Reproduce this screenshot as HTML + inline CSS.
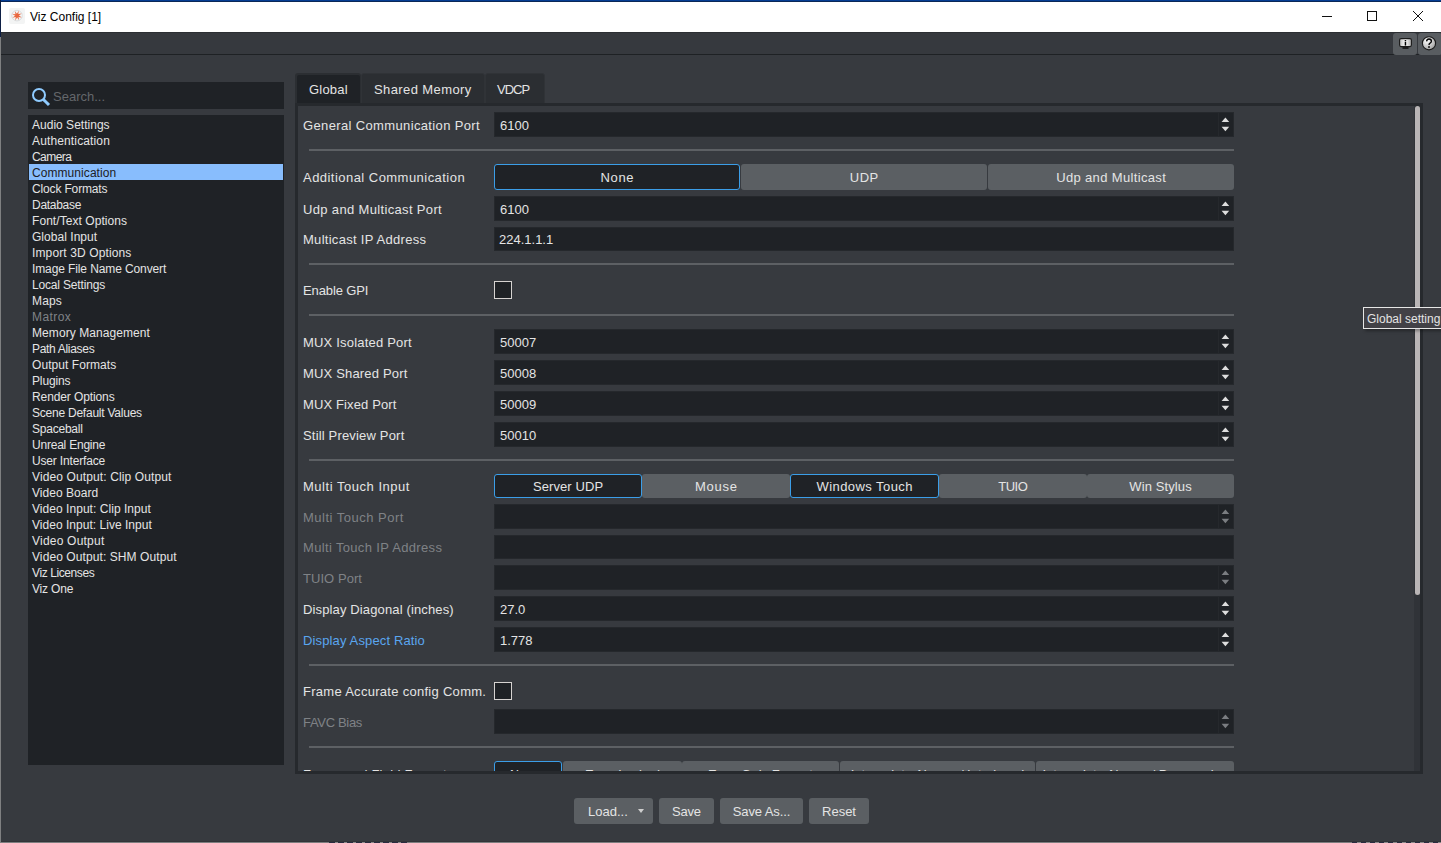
<!DOCTYPE html>
<html><head><meta charset="utf-8"><style>
*{box-sizing:border-box;margin:0;padding:0}
html,body{width:1441px;height:843px;overflow:hidden;background:#7d7e7f}
body{position:relative;font-family:"Liberation Sans",sans-serif;color:#e4e4e4}
.a{position:absolute}
.lbl{position:absolute;left:303px;font-size:13px;white-space:nowrap;letter-spacing:0.2px}
.fld{position:absolute;left:494px;width:740px;background:#1f2226;box-shadow:inset 0 0 0 1px #25282c;font-size:13px;padding-left:6px;white-space:nowrap}
.sep{position:absolute;left:309px;width:925px;height:2px;background:#5d6064}
.btn{position:absolute;background:#5b5f63;border-radius:3px;font-size:13px;text-align:center;white-space:nowrap}
.sel{background:#1f2226;border:1px solid #3b9ee8}
.li{position:absolute;left:32px;font-size:12px;height:16px;line-height:18px;white-space:nowrap}
.up{position:absolute;width:0;height:0;border-left:3.5px solid transparent;border-right:3.5px solid transparent;border-bottom:4.5px solid #dedede}
.dn{position:absolute;width:0;height:0;border-left:3.5px solid transparent;border-right:3.5px solid transparent;border-top:4.5px solid #dedede}
.cb{position:absolute;left:494px;width:18px;height:18px;border:1px solid #d6d3d1;background:#1f2226}
</style></head><body>

<div class="a" style="left:0;top:0;width:1441px;height:842px;background:#373a3f"></div>
<div class="a" style="left:0;top:0;width:1441px;height:1px;background:#053d94"></div>
<div class="a" style="left:0;top:1px;width:1441px;height:1px;background:#0b2757"></div>
<div class="a" style="left:0;top:2px;width:1441px;height:30px;background:#ffffff"></div>
<div class="a" style="left:0;top:0;width:1px;height:37px;background:#0d1f45"></div>
<div class="a" style="left:0;top:37px;width:1px;height:806px;background:#7f8081"></div>
<div class="a" style="left:1px;top:841px;width:1440px;height:1px;background:#323438"></div>
<div class="a" style="left:329px;top:842px;width:78px;height:1px;background:repeating-linear-gradient(90deg,#2a2c40 0 6px,#8a8a8a 6px 9px)"></div>
<div class="a" style="left:1352px;top:842px;width:89px;height:1px;background:repeating-linear-gradient(90deg,#2a2c40 0 5px,#8a8a8a 5px 9px)"></div>
<div class="a" style="left:9px;top:8px;width:16px;height:16px;background:#f3f4f4;border-radius:2px"></div>
<svg class="a" style="left:9px;top:8px" width="16" height="16" viewBox="0 0 16 16"><circle cx="8" cy="7.6" r="5.3" fill="none" stroke="#d6d8da" stroke-width="0.8"/><path d="M8.00 7.60L8.53 8.79L12.89 9.38L9.17 7.03ZM8.00 7.60L7.54 8.81L10.20 12.31L9.23 8.03ZM8.00 7.60L6.81 8.13L6.22 12.49L8.57 8.77ZM8.00 7.60L6.79 7.14L3.29 9.80L7.57 8.83ZM8.00 7.60L7.47 6.41L3.11 5.82L6.83 8.17ZM8.00 7.60L8.46 6.39L5.80 2.89L6.77 7.17ZM8.00 7.60L9.19 7.07L9.78 2.71L7.43 6.43ZM8.00 7.60L9.21 8.06L12.71 5.40L8.43 6.37Z" fill="#e9673f"/></svg>
<div class="a" style="left:30px;top:9px;font-size:12px;color:#000;white-space:nowrap;line-height:16px">Viz Config [1]</div>
<div class="a" style="left:1322px;top:16px;width:10px;height:1px;background:#111"></div>
<div class="a" style="left:1367px;top:11px;width:10px;height:10px;border:1px solid #111"></div>
<svg class="a" style="left:1412px;top:10px" width="12" height="12" viewBox="0 0 12 12"><g stroke="#111" stroke-width="1"><line x1="1" y1="1" x2="11" y2="11"/><line x1="11" y1="1" x2="1" y2="11"/></g></svg>
<div class="a" style="left:1px;top:32px;width:1440px;height:1px;background:#2c2f33"></div>
<div class="a" style="left:1px;top:33px;width:1440px;height:21px;background:#36393e"></div>
<div class="a" style="left:1px;top:54px;width:1440px;height:1px;background:#1e2124"></div>
<div class="a" style="left:1393px;top:33px;width:24px;height:22px;background:#595d61;border-radius:3px"></div>
<div class="a" style="left:1418px;top:33px;width:24px;height:22px;background:#595d61;border-radius:3px"></div>
<svg class="a" style="left:1398px;top:37px" width="15" height="13" viewBox="0 0 15 13">
<defs><linearGradient id="g1" x1="0" y1="0" x2="1" y2="0"><stop offset="0" stop-color="#bdbdbd"/><stop offset="0.5" stop-color="#ffffff"/><stop offset="1" stop-color="#a8a8a8"/></linearGradient>
<radialGradient id="g2" cx="0.35" cy="0.3" r="0.8"><stop offset="0" stop-color="#ffffff"/><stop offset="1" stop-color="#9a9a9a"/></radialGradient></defs>
<rect x="1.6" y="1.6" width="11.8" height="8" rx="1.5" fill="url(#g1)" stroke="#1a1a1a" stroke-width="1.1"/>
<rect x="4.5" y="10.2" width="6" height="1.6" fill="#111"/>
<rect x="6.7" y="3" width="1.5" height="1.4" fill="#000"/><rect x="6.7" y="5" width="1.5" height="3.6" fill="#000"/></svg>
<svg class="a" style="left:1421px;top:36px" width="16" height="15" viewBox="0 0 16 15">
<circle cx="8" cy="7.3" r="6.6" fill="url(#g2)" stroke="#1a1a1a" stroke-width="1.1"/>
<path d="M5.6 5.4 Q5.8 3 8 3 Q10.4 3 10.4 5.2 Q10.4 6.6 8.8 7.3 Q8 7.7 8 9" fill="none" stroke="#000" stroke-width="1.3"/>
<rect x="7.2" y="10.2" width="1.6" height="1.6" fill="#000"/></svg>
<div class="a" style="left:28px;top:82px;width:256px;height:27px;background:#1f2226"></div>
<svg class="a" style="left:30px;top:86px" width="22" height="22" viewBox="0 0 22 22">
<circle cx="9" cy="9" r="6" fill="none" stroke="#8fcbff" stroke-width="2"/>
<line x1="13.2" y1="13.2" x2="19" y2="19" stroke="#8fcbff" stroke-width="3"/></svg>
<div class="a" style="left:53px;top:89px;font-size:13px;color:#64676b;line-height:16px;white-space:nowrap">Search...</div>
<div class="a" style="left:28px;top:115px;width:256px;height:650px;background:#1f2226"></div>
<div class="li" style="top:116px;letter-spacing:0.015px">Audio Settings</div>
<div class="li" style="top:132px;letter-spacing:0.138px">Authentication</div>
<div class="li" style="top:148px;letter-spacing:-0.56px">Camera</div>
<div class="a" style="left:29px;top:164px;width:254px;height:16px;background:#88bdfd"></div>
<div class="li" style="top:164px;color:#1d2024;letter-spacing:0.067px">Communication</div>
<div class="li" style="top:180px;letter-spacing:-0.15px">Clock Formats</div>
<div class="li" style="top:196px;letter-spacing:-0.285px">Database</div>
<div class="li" style="top:212px;letter-spacing:0.062px">Font/Text Options</div>
<div class="li" style="top:228px;letter-spacing:0.037px">Global Input</div>
<div class="li" style="top:244px;letter-spacing:0.125px">Import 3D Options</div>
<div class="li" style="top:260px;letter-spacing:-0.109px">Image File Name Convert</div>
<div class="li" style="top:276px;letter-spacing:-0.169px">Local Settings</div>
<div class="li" style="top:292px;letter-spacing:0.134px">Maps</div>
<div class="li" style="top:308px;color:#7f8286;letter-spacing:0.44px">Matrox</div>
<div class="li" style="top:324px;letter-spacing:0.075px">Memory Management</div>
<div class="li" style="top:340px;letter-spacing:-0.309px">Path Aliases</div>
<div class="li" style="top:356px;letter-spacing:0.061px">Output Formats</div>
<div class="li" style="top:372px;letter-spacing:-0.134px">Plugins</div>
<div class="li" style="top:388px;letter-spacing:-0.107px">Render Options</div>
<div class="li" style="top:404px;letter-spacing:-0.232px">Scene Default Values</div>
<div class="li" style="top:420px;letter-spacing:-0.225px">Spaceball</div>
<div class="li" style="top:436px;letter-spacing:-0.217px">Unreal Engine</div>
<div class="li" style="top:452px;letter-spacing:-0.169px">User Interface</div>
<div class="li" style="top:468px;letter-spacing:0.117px">Video Output: Clip Output</div>
<div class="li" style="top:484px;letter-spacing:0.04px">Video Board</div>
<div class="li" style="top:500px;letter-spacing:0.045px">Video Input: Clip Input</div>
<div class="li" style="top:516px;letter-spacing:0.027px">Video Input: Live Input</div>
<div class="li" style="top:532px;letter-spacing:0.218px">Video Output</div>
<div class="li" style="top:548px;letter-spacing:0.087px">Video Output: SHM Output</div>
<div class="li" style="top:564px;letter-spacing:-0.4px">Viz Licenses</div>
<div class="li" style="top:580px;letter-spacing:-0.166px">Viz One</div>
<div class="a" style="left:295px;top:73px;width:66px;height:31px;background:#2b2e32;border-radius:3px 3px 0 0"></div>
<div class="a" style="left:297px;top:75px;width:63px;height:29px;background:#1f2226;border-radius:2px 2px 0 0"></div>
<div class="a" style="left:361px;top:73px;width:124px;height:31px;background:#2b2e32;border:1px solid #303337;border-radius:3px 3px 0 0"></div>
<div class="a" style="left:485px;top:73px;width:60px;height:31px;background:#2b2e32;border:1px solid #303337;border-radius:3px 3px 0 0"></div>
<div class="a" style="left:309px;top:82px;font-size:13px;line-height:16px;white-space:nowrap;letter-spacing:0.2px">Global</div>
<div class="a" style="left:374px;top:82px;font-size:13px;line-height:16px;white-space:nowrap;letter-spacing:0.4px">Shared Memory</div>
<div class="a" style="left:497px;top:82px;font-size:13px;line-height:16px;white-space:nowrap;letter-spacing:-1.0px">VDCP</div>
<div class="a" style="left:295px;top:103px;width:1128px;height:671px;background:#26292d"></div>
<div class="a" style="left:298px;top:106px;width:1122px;height:665px;background:#373a3f;overflow:hidden" id="pn">
<div class="lbl" style="left:5px;top:7px;height:25px;line-height:25px;letter-spacing:0.36px;">General Communication Port</div>
<div class="fld" style="left:196px;top:6px;height:25px;line-height:28px">6100</div>
<div class="a" style="left:920px;top:6px;width:1px;height:25px;background:#25282c"></div>
<svg class="a" style="left:922px;top:6px" width="12" height="25" viewBox="0 0 12 25"><polygon points="1.6,10 9.2,10 5.4,5.5" fill="#dedede"/><polygon points="1.6,14.8 9.2,14.8 5.4,19.3" fill="#dedede"/></svg>
<div class="sep" style="left:11px;top:43px"></div>
<div class="lbl" style="left:5px;top:59px;height:26px;line-height:26px;letter-spacing:0.461px;">Additional Communication</div>
<div class="btn sel" style="left:196px;top:58px;width:246px;height:26px;line-height:25px;letter-spacing:0.667px;text-indent:0.667px">None</div>
<div class="btn" style="left:443px;top:58px;width:246px;height:26px;line-height:27px;letter-spacing:0.4px;text-indent:0.4px">UDP</div>
<div class="btn" style="left:690px;top:58px;width:246px;height:26px;line-height:27px;letter-spacing:0.343px;text-indent:0.343px">Udp and Multicast</div>
<div class="lbl" style="left:5px;top:91px;height:25px;line-height:25px;letter-spacing:0.343px;">Udp and Multicast Port</div>
<div class="fld" style="left:196px;top:90px;height:25px;line-height:28px">6100</div>
<div class="a" style="left:920px;top:90px;width:1px;height:25px;background:#25282c"></div>
<svg class="a" style="left:922px;top:90px" width="12" height="25" viewBox="0 0 12 25"><polygon points="1.6,10 9.2,10 5.4,5.5" fill="#dedede"/><polygon points="1.6,14.8 9.2,14.8 5.4,19.3" fill="#dedede"/></svg>
<div class="lbl" style="left:5px;top:122px;height:24px;line-height:24px;letter-spacing:0.284px;">Multicast IP Address</div>
<div class="fld" style="left:196px;top:121px;height:24px;line-height:25px;padding-left:5px">224.1.1.1</div>
<div class="sep" style="left:11px;top:157px"></div>
<div class="lbl" style="left:5px;top:176px;height:18px;line-height:18px;letter-spacing:-0.111px;">Enable GPI</div>
<div class="cb" style="left:196px;top:175px"></div>
<div class="sep" style="left:11px;top:208px"></div>
<div class="lbl" style="left:5px;top:224px;height:25px;line-height:25px;letter-spacing:0.2px;">MUX Isolated Port</div>
<div class="fld" style="left:196px;top:223px;height:25px;line-height:28px">50007</div>
<div class="a" style="left:920px;top:223px;width:1px;height:25px;background:#25282c"></div>
<svg class="a" style="left:922px;top:223px" width="12" height="25" viewBox="0 0 12 25"><polygon points="1.6,10 9.2,10 5.4,5.5" fill="#dedede"/><polygon points="1.6,14.8 9.2,14.8 5.4,19.3" fill="#dedede"/></svg>
<div class="lbl" style="left:5px;top:255px;height:25px;line-height:25px;letter-spacing:0.171px;">MUX Shared Port</div>
<div class="fld" style="left:196px;top:254px;height:25px;line-height:28px">50008</div>
<div class="a" style="left:920px;top:254px;width:1px;height:25px;background:#25282c"></div>
<svg class="a" style="left:922px;top:254px" width="12" height="25" viewBox="0 0 12 25"><polygon points="1.6,10 9.2,10 5.4,5.5" fill="#dedede"/><polygon points="1.6,14.8 9.2,14.8 5.4,19.3" fill="#dedede"/></svg>
<div class="lbl" style="left:5px;top:286px;height:25px;line-height:25px;letter-spacing:0.123px;">MUX Fixed Port</div>
<div class="fld" style="left:196px;top:285px;height:25px;line-height:28px">50009</div>
<div class="a" style="left:920px;top:285px;width:1px;height:25px;background:#25282c"></div>
<svg class="a" style="left:922px;top:285px" width="12" height="25" viewBox="0 0 12 25"><polygon points="1.6,10 9.2,10 5.4,5.5" fill="#dedede"/><polygon points="1.6,14.8 9.2,14.8 5.4,19.3" fill="#dedede"/></svg>
<div class="lbl" style="left:5px;top:317px;height:25px;line-height:25px;letter-spacing:0.176px;">Still Preview Port</div>
<div class="fld" style="left:196px;top:316px;height:25px;line-height:28px">50010</div>
<div class="a" style="left:920px;top:316px;width:1px;height:25px;background:#25282c"></div>
<svg class="a" style="left:922px;top:316px" width="12" height="25" viewBox="0 0 12 25"><polygon points="1.6,10 9.2,10 5.4,5.5" fill="#dedede"/><polygon points="1.6,14.8 9.2,14.8 5.4,19.3" fill="#dedede"/></svg>
<div class="sep" style="left:11px;top:353px"></div>
<div class="lbl" style="left:5px;top:369px;height:24px;line-height:24px;letter-spacing:0.525px;">Multi Touch Input</div>
<div class="btn sel" style="left:196px;top:368px;width:148px;height:24px;line-height:23px;letter-spacing:0.09px;text-indent:0.09px">Server UDP</div>
<div class="btn" style="left:344px;top:368px;width:148px;height:24px;line-height:25px;letter-spacing:0.7px;text-indent:0.7px">Mouse</div>
<div class="btn sel" style="left:492px;top:368px;width:149px;height:24px;line-height:23px;letter-spacing:0.433px;text-indent:0.433px">Windows Touch</div>
<div class="btn" style="left:641px;top:368px;width:148px;height:24px;line-height:25px;letter-spacing:-0.501px;text-indent:-0.501px">TUIO</div>
<div class="btn" style="left:789px;top:368px;width:147px;height:24px;line-height:25px;letter-spacing:0.111px;text-indent:0.111px">Win Stylus</div>
<div class="lbl" style="left:5px;top:399px;height:25px;line-height:25px;letter-spacing:0.493px;color:#7f8286;">Multi Touch Port</div>
<div class="fld" style="left:196px;top:398px;height:25px;line-height:28px"></div>
<div class="a" style="left:920px;top:398px;width:1px;height:25px;background:#25282c"></div>
<svg class="a" style="left:922px;top:398px" width="12" height="25" viewBox="0 0 12 25"><polygon points="1.6,10 9.2,10 5.4,5.5" fill="#7a7d81"/><polygon points="1.6,14.8 9.2,14.8 5.4,19.3" fill="#7a7d81"/></svg>
<div class="lbl" style="left:5px;top:430px;height:24px;line-height:24px;letter-spacing:0.343px;color:#7f8286;">Multi Touch IP Address</div>
<div class="fld" style="left:196px;top:429px;height:24px;line-height:25px;padding-left:5px"></div>
<div class="lbl" style="left:5px;top:460px;height:25px;line-height:25px;letter-spacing:0.05px;color:#7f8286;">TUIO Port</div>
<div class="fld" style="left:196px;top:459px;height:25px;line-height:28px"></div>
<div class="a" style="left:920px;top:459px;width:1px;height:25px;background:#25282c"></div>
<svg class="a" style="left:922px;top:459px" width="12" height="25" viewBox="0 0 12 25"><polygon points="1.6,10 9.2,10 5.4,5.5" fill="#7a7d81"/><polygon points="1.6,14.8 9.2,14.8 5.4,19.3" fill="#7a7d81"/></svg>
<div class="lbl" style="left:5px;top:491px;height:25px;line-height:25px;letter-spacing:0.133px;">Display Diagonal (inches)</div>
<div class="fld" style="left:196px;top:490px;height:25px;line-height:28px">27.0</div>
<div class="a" style="left:920px;top:490px;width:1px;height:25px;background:#25282c"></div>
<svg class="a" style="left:922px;top:490px" width="12" height="25" viewBox="0 0 12 25"><polygon points="1.6,10 9.2,10 5.4,5.5" fill="#dedede"/><polygon points="1.6,14.8 9.2,14.8 5.4,19.3" fill="#dedede"/></svg>
<div class="lbl" style="left:5px;top:522px;height:25px;line-height:25px;letter-spacing:0.137px;color:#5aa6f0;">Display Aspect Ratio</div>
<div class="fld" style="left:196px;top:521px;height:25px;line-height:28px">1.778</div>
<div class="a" style="left:920px;top:521px;width:1px;height:25px;background:#25282c"></div>
<svg class="a" style="left:922px;top:521px" width="12" height="25" viewBox="0 0 12 25"><polygon points="1.6,10 9.2,10 5.4,5.5" fill="#dedede"/><polygon points="1.6,14.8 9.2,14.8 5.4,19.3" fill="#dedede"/></svg>
<div class="sep" style="left:11px;top:558px"></div>
<div class="lbl" style="left:5px;top:577px;height:18px;line-height:18px;letter-spacing:0.285px;">Frame Accurate config Comm.</div>
<div class="cb" style="left:196px;top:576px"></div>
<div class="lbl" style="left:5px;top:604px;height:25px;line-height:25px;letter-spacing:-0.325px;color:#7f8286;">FAVC Bias</div>
<div class="fld" style="left:196px;top:603px;height:25px;line-height:28px"></div>
<div class="a" style="left:920px;top:603px;width:1px;height:25px;background:#25282c"></div>
<svg class="a" style="left:922px;top:603px" width="12" height="25" viewBox="0 0 12 25"><polygon points="1.6,10 9.2,10 5.4,5.5" fill="#7a7d81"/><polygon points="1.6,14.8 9.2,14.8 5.4,19.3" fill="#7a7d81"/></svg>
<div class="sep" style="left:11px;top:640px"></div>
<div class="lbl" style="left:5px;top:656px;height:25px;line-height:25px;letter-spacing:0.2px;">Frame and Field Format</div>
<div class="btn sel" style="left:196px;top:655px;width:68px;height:25px;line-height:26px;letter-spacing:0px;text-indent:0px">Always</div>
<div class="btn" style="left:265px;top:655px;width:119px;height:25px;line-height:28px;letter-spacing:0px;text-indent:0px">Even Locked</div>
<div class="btn" style="left:384px;top:655px;width:157px;height:25px;line-height:28px;letter-spacing:0px;text-indent:0px">Even Only Format</div>
<div class="btn" style="left:542px;top:655px;width:195px;height:25px;line-height:28px;letter-spacing:0px;text-indent:0px">Interpolate Always / Interlaced</div>
<div class="btn" style="left:738px;top:655px;width:198px;height:25px;line-height:28px;letter-spacing:0px;text-indent:0px">Interpolate Always / Progressive</div>
<div class="a" style="left:1116px;top:0;width:6px;height:665px;background:#303338"></div>
<div class="a" style="left:1117px;top:0;width:5px;height:489px;background:#b9b5b6;border-radius:2.5px"></div>
</div>
<div class="a" style="left:1363px;top:307px;width:90px;height:22px;background:#424146;border:1px solid #e6e6e6;box-shadow:2px 2px 3px rgba(0,0,0,0.35)"></div>
<div class="a" style="left:1367px;top:311px;font-size:12px;line-height:16px;white-space:nowrap">Global setting</div>
<div class="btn" style="left:659px;top:798px;width:55px;height:26px;line-height:27px;letter-spacing:-0.167px;text-indent:-0.167px">Save</div>
<div class="btn" style="left:720px;top:798px;width:83px;height:26px;line-height:27px;letter-spacing:-0.111px;text-indent:-0.111px">Save As...</div>
<div class="btn" style="left:809px;top:798px;width:60px;height:26px;line-height:27px;letter-spacing:0.0px;text-indent:0.0px">Reset</div>
<div class="btn" style="left:574px;top:798px;width:79px;height:26px;line-height:27px;text-align:left;padding-left:14px">Load...</div>
<div class="dn" style="left:638px;top:809px;border-left-width:3px;border-right-width:3px;border-top-width:4px;border-top-color:#cfcfcf"></div>
</body></html>
